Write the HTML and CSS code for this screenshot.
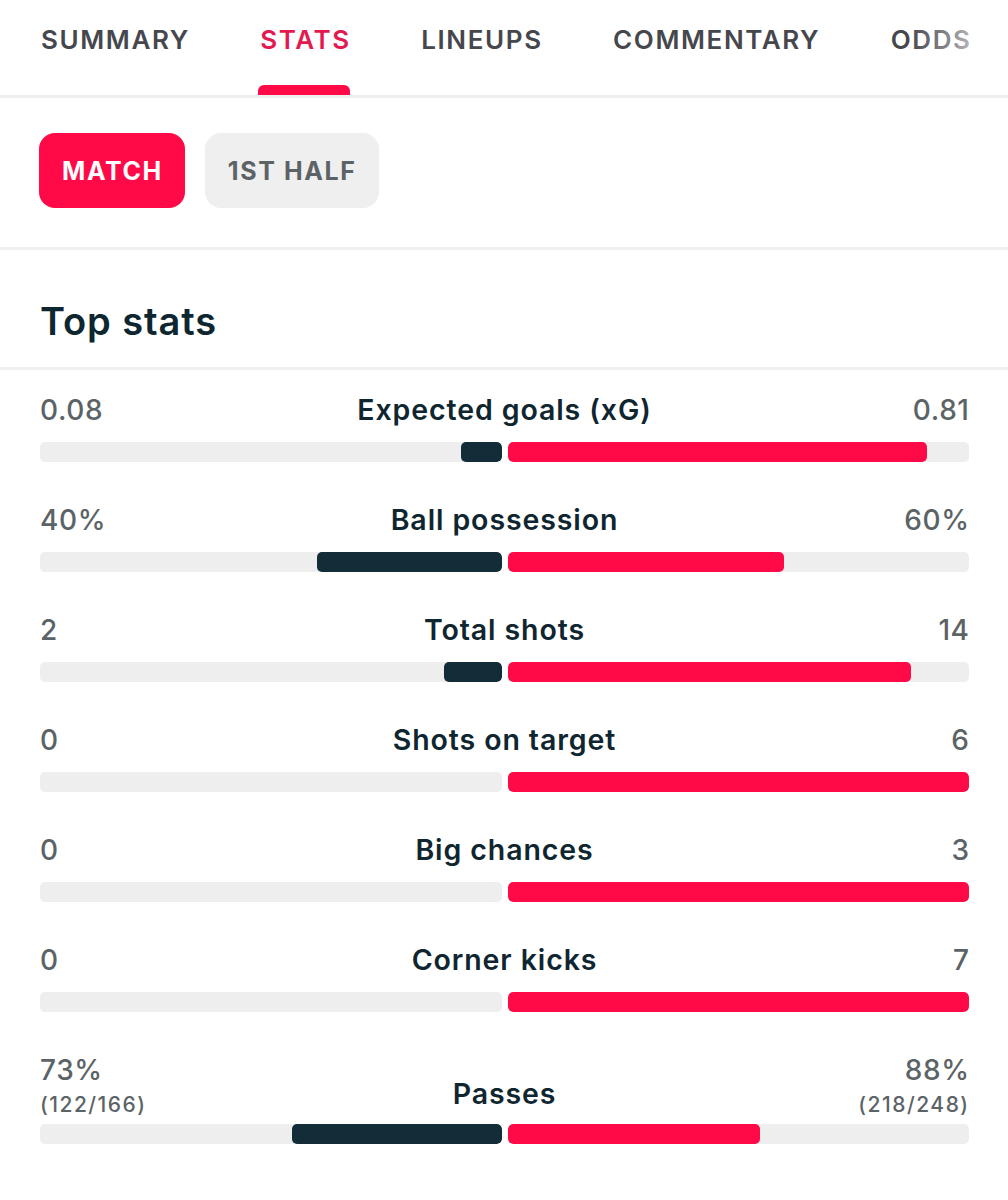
FILE: index.html
```html
<!DOCTYPE html>
<html lang="en">
<head>
<meta charset="utf-8">
<title>Stats</title>
<link rel="stylesheet" href="styles.css">
</head>
<body>
<nav class="tabs">
  <div class="tab"><span class="tab-label">SUMMARY</span><span class="tab-ind"></span></div>
  <div class="tab tab-active"><span class="tab-label">STATS</span><span class="tab-ind"></span></div>
  <div class="tab"><span class="tab-label">LINEUPS</span><span class="tab-ind"></span></div>
  <div class="tab"><span class="tab-label">COMMENTARY</span><span class="tab-ind"></span></div>
  <div class="tab"><span class="tab-label">ODDS</span><span class="tab-ind"></span></div>
</nav>

<section class="periods">
  <button class="pill pill-active">MATCH</button>
  <button class="pill">1ST HALF</button>
</section>

<section class="heading">
  <h2 class="heading-title">Top stats</h2>
</section>

<section class="stats">
  <div class="stat">
    <div class="stat-head">
      <span class="val val-left">0.08</span>
      <span class="label">Expected goals (xG)</span>
      <span class="val val-right">0.81</span>
    </div>
    <div class="bar">
      <div class="track track-left"><div class="fill fill-home" style="width:8.7%"></div></div>
      <div class="track track-right"><div class="fill fill-away" style="width:90.9%"></div></div>
    </div>
  </div>

  <div class="stat">
    <div class="stat-head">
      <span class="val val-left">40%</span>
      <span class="label">Ball possession</span>
      <span class="val val-right">60%</span>
    </div>
    <div class="bar">
      <div class="track track-left"><div class="fill fill-home" style="width:40%"></div></div>
      <div class="track track-right"><div class="fill fill-away" style="width:60%"></div></div>
    </div>
  </div>

  <div class="stat">
    <div class="stat-head">
      <span class="val val-left">2</span>
      <span class="label">Total shots</span>
      <span class="val val-right">14</span>
    </div>
    <div class="bar">
      <div class="track track-left"><div class="fill fill-home" style="width:12.5%"></div></div>
      <div class="track track-right"><div class="fill fill-away" style="width:87.5%"></div></div>
    </div>
  </div>

  <div class="stat">
    <div class="stat-head">
      <span class="val val-left">0</span>
      <span class="label">Shots on target</span>
      <span class="val val-right">6</span>
    </div>
    <div class="bar">
      <div class="track track-left"><div class="fill fill-home" style="width:0%"></div></div>
      <div class="track track-right"><div class="fill fill-away" style="width:100%"></div></div>
    </div>
  </div>

  <div class="stat">
    <div class="stat-head">
      <span class="val val-left">0</span>
      <span class="label">Big chances</span>
      <span class="val val-right">3</span>
    </div>
    <div class="bar">
      <div class="track track-left"><div class="fill fill-home" style="width:0%"></div></div>
      <div class="track track-right"><div class="fill fill-away" style="width:100%"></div></div>
    </div>
  </div>

  <div class="stat">
    <div class="stat-head">
      <span class="val val-left">0</span>
      <span class="label">Corner kicks</span>
      <span class="val val-right">7</span>
    </div>
    <div class="bar">
      <div class="track track-left"><div class="fill fill-home" style="width:0%"></div></div>
      <div class="track track-right"><div class="fill fill-away" style="width:100%"></div></div>
    </div>
  </div>

  <div class="stat stat-multi">
    <div class="stat-head">
      <span class="val val-left"><span class="val-main">73%</span><span class="val-sub">(122/166)</span></span>
      <span class="label label-low">Passes</span>
      <span class="val val-right"><span class="val-main">88%</span><span class="val-sub">(218/248)</span></span>
    </div>
    <div class="bar">
      <div class="track track-left"><div class="fill fill-home" style="width:45.3%"></div></div>
      <div class="track track-right"><div class="fill fill-away" style="width:54.7%"></div></div>
    </div>
  </div>
</section>
</body>
</html>
```

FILE: styles.css
```css
* {
  box-sizing: border-box;
}

html, body {
  margin: 0;
  padding: 0;
  background: #ffffff;
}

body {
  font-family: Inter, "Noto Sans", "Liberation Sans", sans-serif;
  color: #0f2630;
  width: 1008px;
  overflow: hidden;
}

/* Tabs */
.tabs {
  position: relative;
  display: flex;
  gap: 72px;
  padding-left: 41px;
  height: 98px;
  border-bottom: 3px solid #efefef;
  overflow: hidden;
  white-space: nowrap;
}

.tabs::after {
  content: "";
  position: absolute;
  top: 0;
  right: 0;
  width: 100px;
  height: 95px;
  background: linear-gradient(to right, rgba(255,255,255,0) 0%, rgba(255,255,255,0.35) 40%, rgba(255,255,255,0.8) 80%, #ffffff 100%);
  pointer-events: none;
}

.tab {
  display: flex;
  flex-direction: column;
  align-items: stretch;
  justify-content: space-between;
  height: 95px;
  padding-top: 24px;
  flex: none;
}

.tab-label {
  font-size: 26px;
  line-height: 32px;
  font-weight: 600;
  letter-spacing: 1.6px;
  color: #46474d;
  margin-right: -1.6px;
}

.tab-ind {
  display: block;
  height: 10px;
  margin: 0 -1px 0 -2px;
  border-radius: 6px 6px 0 0;
  background: transparent;
}

.tab-active .tab-label {
  color: #e3194f;
}

.tab-active .tab-ind {
  background: #ff0a47;
}

/* Period pills */
.periods {
  display: flex;
  gap: 20px;
  padding: 35px 40px 39px 39px;
  border-bottom: 3px solid #f0f0f0;
}

.pill {
  font-family: Inter, "Noto Sans", "Liberation Sans", sans-serif;
  height: 75px;
  padding: 0 22px 0 23px;
  border: none;
  border-radius: 16px;
  background: #efefef;
  color: #5c6366;
  font-size: 25px;
  font-weight: 700;
  letter-spacing: 1.6px;
  cursor: pointer;
}

.pill-active {
  background: #ff0a47;
  color: #ffffff;
}

/* Heading */
.heading {
  padding: 48px 40px 23px;
  border-bottom: 3px solid #f0f0f0;
}

.heading-title {
  margin: 0;
  font-size: 38px;
  line-height: 46px;
  font-weight: 600;
  color: #0d2630;
  letter-spacing: 0.9px;
}

/* Stats */
.stats {
  padding: 23px 39px 40px 40px;
}

.stat {
  margin-bottom: 41px;
}

.stat-head {
  display: grid;
  grid-template-columns: 1fr auto 1fr;
  align-items: center;
}

.val {
  font-size: 28px;
  line-height: 34px;
  font-weight: 500;
  letter-spacing: 0.6px;
  color: #5b6366;
}

.val-left {
  justify-self: start;
  text-align: left;
}

.val-right {
  justify-self: end;
  text-align: right;
  margin-right: -0.6px;
}

.label {
  font-size: 28.5px;
  line-height: 34px;
  font-weight: 600;
  letter-spacing: 0.9px;
  color: #0f2630;
  text-align: center;
}

.bar {
  display: grid;
  grid-template-columns: 1fr 1fr;
  gap: 6px;
  margin-top: 15px;
  height: 20px;
}

.track {
  display: flex;
  height: 20px;
  background: #eeeeee;
  border-radius: 5px;
  overflow: hidden;
}

.track-left {
  justify-content: flex-end;
}

.track-right {
  justify-content: flex-start;
}

.fill {
  height: 100%;
  border-radius: 5px;
}

.fill-home {
  background: #132d38;
}

.fill-away {
  background: #ff0a47;
}

/* Multi-line stat (Passes) */
.stat-multi .stat-head {
  align-items: start;
}

.val-main,
.val-sub {
  display: block;
}

.val-sub {
  font-size: 21px;
  line-height: 22px;
  margin-top: 7px;
  letter-spacing: 1.5px;
}

.label-low {
  padding-top: 24px;
}

.stat-multi .bar {
  margin-top: 8px;
}
```
